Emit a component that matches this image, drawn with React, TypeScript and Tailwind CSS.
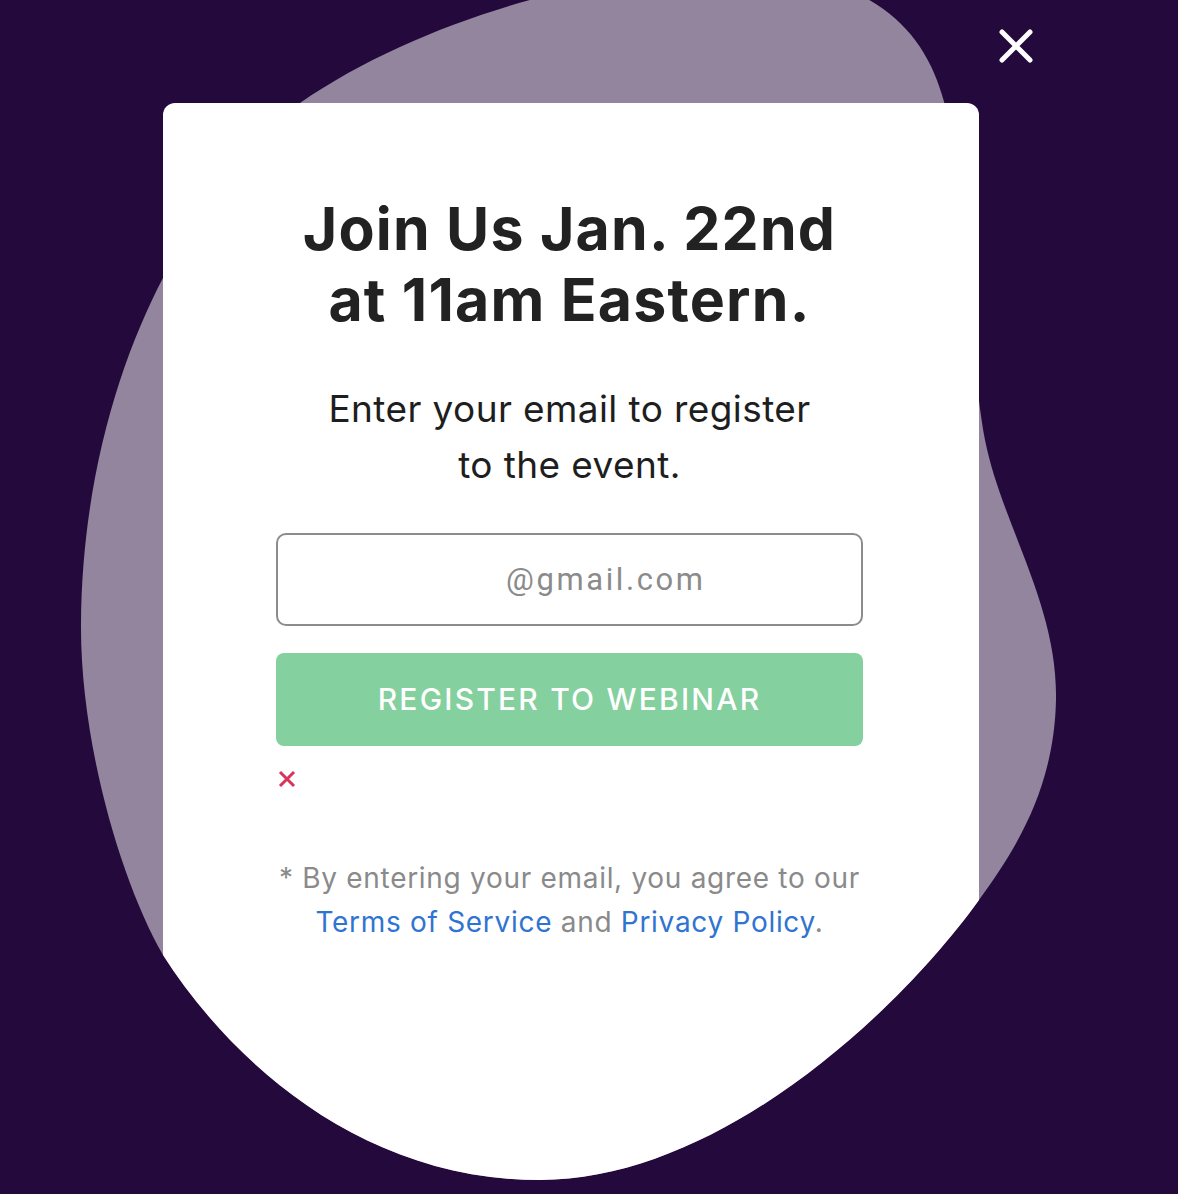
import React from "react";

const BLOB =
  "M 730 -30 C 860 -30, 920 20, 942 95 C 966 170, 968 350, 985 440 C 1002 525, 1058 605, 1056 700 C 1054 790, 1015 850, 979 900 C 900 1010, 720 1180, 540 1180 C 360 1180, 230 1060, 163 955 C 120 880, 80 740, 81 623 C 82 480, 120 360, 163 278 C 200 200, 245 145, 300 103 C 420 20, 600 -30, 730 -30 Z";

export default function App() {
  return (
    <div className="relative min-h-[1194px] w-full overflow-hidden bg-[#240a3c]">
      <svg
        className="pointer-events-none absolute left-0 top-0"
        width="1178"
        height="1194"
        viewBox="0 0 1178 1194"
      >
        <defs>
          <clipPath id="cardClip">
            <path d={BLOB} />
            <rect x="0" y="0" width="1178" height="880" />
          </clipPath>
        </defs>
        <path d={BLOB} fill="#94859f" />
        <rect
          x="163"
          y="103"
          width="816"
          height="1200"
          rx="12"
          fill="#ffffff"
          clipPath="url(#cardClip)"
        />
      </svg>

      <button
        aria-label="Close"
        className="absolute left-[998px] top-[28px] flex h-[36px] w-[36px] items-center justify-center"
      >
        <svg width="36" height="36" viewBox="0 0 36 36">
          <path d="M4 4 L32 32 M32 4 L4 32" stroke="#ffffff" strokeWidth="5" strokeLinecap="round" />
        </svg>
      </button>

      <div className="relative ml-[163px] mt-[103px] flex w-[816px] flex-col items-stretch pb-[200px] pl-[113px] pr-[116px] pt-[90px]">
        <h1
          className="text-center text-[59px] font-bold leading-[71px] tracking-[1.2px] text-[#222222]"
          style={{ fontFamily: "Inter, 'Open Sans', sans-serif" }}
        >
          Join Us Jan. 22nd
          <br />
          at 11am Eastern.
        </h1>

        <p
          className="mt-[46px] text-center text-[37px] leading-[56px] tracking-[0.4px] text-[#1e1e1e]"
          style={{ fontFamily: "Inter, Roboto, sans-serif" }}
        >
          Enter your email to register
          <br />
          to the event.
        </p>

        <div className="mt-[40px] flex h-[93px] items-center rounded-[10px] border-2 border-[#8c8c8c] bg-white pl-[228px] pt-[2px]">
          <span
            className="text-[31px] tracking-[2.6px] text-[#8b8b8b]"
            style={{ fontFamily: "Roboto, 'Liberation Sans', sans-serif" }}
          >
            @gmail.com
          </span>
        </div>

        <button
          className="mt-[27px] flex h-[93px] items-center justify-center rounded-[8px] bg-[#84d09e] text-[30px] font-medium tracking-[2.2px] text-white"
          style={{ fontFamily: "Inter, 'Open Sans', sans-serif" }}
        >
          REGISTER TO WEBINAR
        </button>

        <div className="mt-[23px] flex h-[20px] items-center pl-[2px]">
          <svg width="18" height="18" viewBox="0 0 18 18">
            <path d="M2 2 L16 16 M16 2 L2 16" stroke="#d6345a" strokeWidth="3" />
          </svg>
        </div>

        <p
          className="mt-[67px] text-center text-[28px] leading-[44px] tracking-[0.7px] text-[#8a8a8a]"
          style={{ fontFamily: "Inter, 'Open Sans', sans-serif" }}
        >
          * By entering your email, you agree to our
          <br />
          <a className="text-[#2f74d0]">Terms of Service</a> and{" "}
          <a className="text-[#2f74d0]">Privacy Policy</a>.
        </p>
      </div>
    </div>
  );
}
